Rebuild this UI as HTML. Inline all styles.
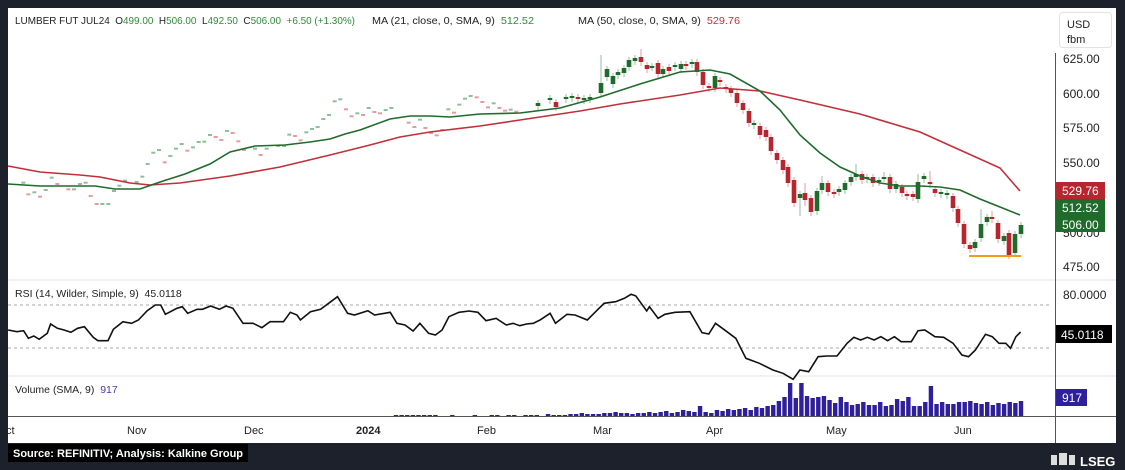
<!DOCTYPE html>
<html><head><meta charset="utf-8"><style>
html,body{margin:0;padding:0;background:#1d212b;width:1125px;height:470px;overflow:hidden;font-family:"Liberation Sans",sans-serif}
svg{position:absolute;left:0;top:0}
</style></head><body>
<svg id="s" width="1125" height="470" xmlns="http://www.w3.org/2000/svg" font-family="Liberation Sans, sans-serif">
<rect x="0" y="0" width="1125" height="470" fill="#1d212b"/>
<rect x="8" y="8" width="1108" height="435" fill="#fff"/>
<line x1="8" y1="280" x2="1116" y2="280" stroke="#e6e6e6"/>
<line x1="8" y1="376" x2="1116" y2="376" stroke="#e6e6e6"/>
<line x1="8" y1="416.5" x2="1116" y2="416.5" stroke="#555"/>
<line x1="1055.5" y1="53" x2="1055.5" y2="443" stroke="#555"/>
<line x1="8" y1="305" x2="1052" y2="305" stroke="#aaa" stroke-dasharray="3,3"/>
<line x1="8" y1="348" x2="1052" y2="348" stroke="#aaa" stroke-dasharray="3,3"/>
<text x="15" y="24" font-size="10.5" fill="#222" textLength="340" lengthAdjust="spacingAndGlyphs">LUMBER FUT JUL24&#160; O<tspan fill="#2e8b3a">499.00</tspan>&#160; H<tspan fill="#2e8b3a">506.00</tspan>&#160; L<tspan fill="#2e8b3a">492.50</tspan>&#160; C<tspan fill="#2e8b3a">506.00</tspan>&#160; <tspan fill="#2e8b3a">+6.50 (+1.30%)</tspan></text>
<text x="372" y="24" font-size="10.5" fill="#222" textLength="162" lengthAdjust="spacingAndGlyphs">MA (21, close, 0, SMA, 9)&#160; <tspan fill="#2e8b3a">512.52</tspan></text>
<text x="578" y="24" font-size="10.5" fill="#222" textLength="162" lengthAdjust="spacingAndGlyphs">MA (50, close, 0, SMA, 9)&#160; <tspan fill="#c0303a">529.76</tspan></text>
<rect x="1059.5" y="12.5" width="52" height="35" rx="3" fill="#fff" stroke="#e2e2e2"/>
<text x="1067" y="28" font-size="11" fill="#222">USD</text>
<text x="1067" y="43" font-size="11" fill="#222">fbm</text>
<g font-size="12" fill="#222">
<text x="1063" y="63">625.00</text><text x="1063" y="98">600.00</text><text x="1063" y="132">575.00</text><text x="1063" y="167">550.00</text><text x="1063" y="237">500.00</text><text x="1063" y="271">475.00</text>
<text x="1063" y="299">80.0000</text>
</g>
<g id="main"></g>
<polyline fill="none" stroke="#c0303a" stroke-width="1.6" points="8,166 40,172 80,175 100,177 130,183 150,185 180,183 230,176 280,167 330,155 370,145 400,137 430,132 480,126 520,120 580,111 620,104 680,95 720,88 760,91 800,100 860,114 920,132 960,150 1000,168 1020,191"/>
<polyline fill="none" stroke="#1e6b2b" stroke-width="1.6" points="8,184 40,186 80,186 95,186 115,189 140,189 160,182 185,174 210,164 230,152 255,146 285,145 310,142 330,139 345,134 360,130 390,119 410,116 430,116 450,117 460,116 480,114 520,113 560,108 600,97 640,84 680,72 710,70 730,74 760,91 780,110 800,135 820,153 840,167 860,176 880,183 900,186 920,186 940,187 960,190 980,199 1000,207 1020,215"/>
<line x1="969" y1="256" x2="1021" y2="256" stroke="#f59a1b" stroke-width="2"/>
<rect x="1056" y="182" width="49" height="17" fill="#b7262f"/><text x="1062" y="195" font-size="12" fill="#fff">529.76</text>
<rect x="1056" y="199" width="49" height="33" fill="#1e6b2b"/><text x="1062" y="212" font-size="12" fill="#fff">512.52</text><text x="1062" y="229" font-size="12" fill="#fff">506.00</text>
<text x="15" y="297" font-size="10.5" fill="#222">RSI (14, Wilder, Simple, 9)&#160; 45.0118</text>
<polyline id="rsi" fill="none" stroke="#111" stroke-width="1.6" points=""/>
<rect x="1056" y="325" width="56" height="18" fill="#000"/><text x="1061" y="339" font-size="12" fill="#fff">45.0118</text>
<text x="15" y="393" font-size="10.5" fill="#222">Volume (SMA, 9)&#160; <tspan fill="#4a3aa8">917</tspan></text>
<g id="vol"></g>
<rect x="1056" y="389" width="31" height="17" fill="#2e1f9a"/><text x="1062" y="402" font-size="12" fill="#fff">917</text>
<g font-size="11" fill="#222">
<text x="6" y="434">ct</text><text x="127" y="434">Nov</text><text x="244" y="434">Dec</text><text x="356" y="434" font-weight="bold">2024</text><text x="477" y="434">Feb</text><text x="593" y="434">Mar</text><text x="706" y="434">Apr</text><text x="826" y="434">May</text><text x="954" y="434">Jun</text>
</g>
<rect x="8" y="444" width="240" height="18" fill="#000"/>
<text x="128" y="457" font-size="11" font-weight="bold" fill="#fff" text-anchor="middle">Source: REFINITIV; Analysis: Kalkine Group</text>
<g fill="#ddd"><rect x="1051" y="455" width="6" height="10"/><rect x="1059" y="453" width="8" height="12"/><rect x="1069" y="455" width="6" height="10"/></g>
<text x="1080" y="466" font-size="13" font-weight="bold" fill="#fff">LSEG</text>
</svg>
<script>
var NS="http://www.w3.org/2000/svg";
function el(p,t,a){var e=document.createElementNS(NS,t);for(var k in a)e.setAttribute(k,a[k]);p.appendChild(e);return e;}
var G="#1e6b2b",R="#b7262f",m=document.getElementById("main");
var d=[[70,428,1],[85,463,0],[103,457,1],[120,470,0],[137,450,1],[155,413,1],[172,432,0],[205,448,0],[222,448,1],[240,432,1],[257,428,1],[272,468,0],[290,492,0],[307,492,1],[325,492,1],[342,453,1],[358,437,1],[375,422,1],[410,426,1],[427,410,1],[443,372,1],[460,338,1],[477,330,1],[494,367,0],[511,348,1],[528,326,1],[545,312,1],[562,332,0],[579,322,1],[596,306,1],[613,305,1],[630,285,1],[647,291,0],[664,300,0],[681,273,1],[698,279,0],[715,304,0],[732,330,0],[765,326,1],[782,345,0],[800,326,1],[835,318,1],[852,318,1],[868,284,1],[885,288,0],[902,301,0],[919,277,1],[936,267,1],[953,261,1],[970,237,1],[987,225,1],[1004,184,1],[1021,178,1],[1038,208,0],[1055,229,0],[1072,220,1],[1089,225,0],[1106,204,1],[1123,216,0],[1140,220,0],[1157,210,1],[1174,204,1],[1226,248,0],[1243,261,0],[1260,239,1],[1276,264,0],[1293,279,0],[1310,286,0],[1327,270,1],[1345,208,1],[1362,218,0],[1378,194,1],[1395,176,1],[1412,168,1],[1430,172,0],[1447,186,0],[1464,202,0],[1481,190,1],[1498,204,0],[1515,212,0],[1532,209,1],[1549,215,0]];
d.forEach(function(c){el(m,"rect",{x:c[0]/3-2,y:40+c[1]/3-1,width:4,height:2,fill:c[2]?"#8fbf98":"#e79aa0"});});
var c2=[[538,103,106,1],[550,98,100,1],[556,102,107,0],[566,97,99,1],[572,96,98,1],[578,97,99,0],[584,98,100,1],[590,97,99,1],[601,83,93,1,55],[607,69,77,1],[613,76,84,1],[618,72,75,1],[624,68,73,1],[629,60,67,1],[635,58,61,1],[641,57,62,0,49],[647,65,69,0],[652,66,67,1],[658,63,74,0],[663,69,74,1],[669,67,71,0],[675,65,67,1],[681,64,69,1],[686,64,66,0],[692,62,64,1],[697,62,72,0],[703,72,85,0],[709,86,88,0],[715,76,88,1],[720,80,82,0],[726,87,89,0],[731,89,93,0],[737,93,103,0],[743,103,110,0],[749,111,123,0],[754,123,125,1],[760,126,135,0],[766,130,137,0],[771,137,151,0],[777,153,160,0],[783,160,170,0],[788,167,183,0],[794,180,203,0],[800,194,198,1,191,216],[805,193,200,0,183,206],[811,198,212,0],[817,191,211,1],[822,183,190,1,176],[828,183,192,0],[834,192,194,0],[839,189,192,1],[845,183,190,1],[851,177,182,1],[856,174,177,1,164],[862,174,180,0],[867,177,179,1],[873,177,183,0],[879,180,182,1],[884,177,178,1,172],[890,177,189,0],[896,184,189,1],[902,187,193,0],[907,194,196,0],[913,194,197,0],[918,182,199,1,174],[924,176,179,1],[930,182,184,0,171],[935,189,193,0],[941,192,194,1],[947,193,195,1],[953,196,208,0],[958,209,223,0],[964,224,244,0],[970,245,249,0],[975,242,248,1],[981,224,238,1,209],[987,217,222,1],[992,217,219,0,211],[998,223,239,0],[1004,236,241,1],[1009,233,255,0],[1015,234,253,1],[1021,225,234,1]];
c2.forEach(function(c){var col=c[3]?G:R;var wt=c[4]||c[1]-3,wb=c[5]||c[2]+4;el(m,"line",{x1:c[0],x2:c[0],y1:wt,y2:wb,stroke:c[3]?"#8fbf98":"#e79aa0","stroke-width":1});el(m,"rect",{x:c[0]-2.3,y:c[1],width:4.6,height:Math.max(2,c[2]-c[1]),fill:col});});
var r=[12,150,25,155,35,152,42,175,50,168,58,178,70,160,75,132,85,145,95,150,105,157,115,145,125,140,138,172,145,182,160,182,168,148,182,125,195,130,205,120,218,92,230,75,238,75,245,103,262,85,270,80,278,100,292,88,300,88,312,78,325,88,335,78,345,85,360,130,375,130,388,143,400,125,420,125,430,97,440,105,445,120,460,95,475,88,490,65,500,50,515,100,525,105,545,92,555,105,578,97,588,130,600,135,612,153,622,130,635,160,645,165,655,150,665,110,680,97,695,93,708,97,720,122,735,115,750,135,760,130,770,137,780,132,790,130,800,120,815,100,823,130,840,103,852,105,870,120,880,100,895,70,912,65,925,55,935,43,942,48,958,93,962,80,975,115,985,103,1000,97,1022,95,1040,158,1050,162,1060,130,1075,152,1090,175,1105,235,1125,250,1145,270,1160,280,1175,298,1185,270,1198,275,1212,230,1225,228,1240,228,1255,190,1265,172,1275,180,1285,172,1295,180,1305,170,1315,182,1325,170,1335,185,1350,185,1360,152,1370,150,1385,170,1398,172,1412,190,1425,225,1435,230,1445,210,1460,163,1470,170,1480,190,1490,190,1497,205,1505,170,1512,156];
var p=[];for(var i=0;i<r.length;i+=2)p.push((r[i]*0.675).toFixed(1)+","+(280+r[i+1]/3).toFixed(1));
document.getElementById("rsi").setAttribute("points",p.join(" "));
var v=document.getElementById("vol");
var h=[1,1,1,1,1,1,1,1,0,0,1,0,0,0,1,0,0,1,1,0,1,1,0,1,1,1,0,2,1,1,1,2,2,3,2,2,2,3,3,4,3,3,2,3,3,4,3,4,5,3,4,6,5,4,10,4,3,6,5,7,6,7,8,6,9,8,10,11,15,19,33,18,33,20,18,19,20,16,13,19,14,11,12,14,11,11,14,10,11,17,15,19,10,10,14,30,12,14,12,12,14,14,15,13,12,14,11,13,12,14,13,15];
var x0=396,step=(1021-396)/(h.length-1);
h.forEach(function(hh,i){if(hh>0)el(v,"rect",{x:x0+i*step-2.2,y:416-hh,width:4.4,height:hh,fill:"#2e1f9a"});});
</script>
</body></html>
